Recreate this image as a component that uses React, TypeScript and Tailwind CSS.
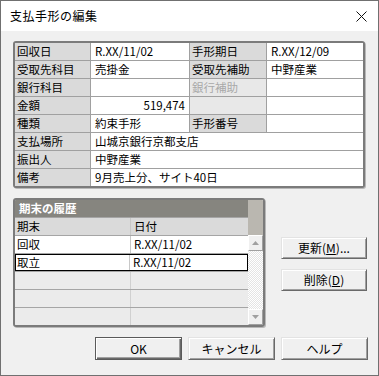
import React from 'react';

type Cell = { text?: string; kind: 'label' | 'value' | 'off'; span?: boolean; right?: boolean };

const rows: Cell[][] = [
  [
    { text: '回収日', kind: 'label' },
    { text: 'R.XX/11/02', kind: 'value' },
    { text: '手形期日', kind: 'label' },
    { text: 'R.XX/12/09', kind: 'value' },
  ],
  [
    { text: '受取先科目', kind: 'label' },
    { text: '売掛金', kind: 'value' },
    { text: '受取先補助', kind: 'label' },
    { text: '中野産業', kind: 'value' },
  ],
  [
    { text: '銀行科目', kind: 'label' },
    { text: '', kind: 'value' },
    { text: '銀行補助', kind: 'off' },
    { text: '', kind: 'value' },
  ],
  [
    { text: '金額', kind: 'label' },
    { text: '519,474', kind: 'value', right: true },
    { text: '', kind: 'off' },
    { text: '', kind: 'value' },
  ],
  [
    { text: '種類', kind: 'label' },
    { text: '約束手形', kind: 'value' },
    { text: '手形番号', kind: 'label' },
    { text: '', kind: 'value' },
  ],
  [
    { text: '支払場所', kind: 'label' },
    { text: '山城京銀行京都支店', kind: 'value', span: true },
  ],
  [
    { text: '振出人', kind: 'label' },
    { text: '中野産業', kind: 'value', span: true },
  ],
  [
    { text: '備考', kind: 'label' },
    { text: '9月売上分、サイト40日', kind: 'value', span: true },
  ],
];

function ClassicButton({ children, primary }: { children: React.ReactNode; primary?: boolean }) {
  return (
    <div
      className={
        primary
          ? 'h-[23px] w-[87px] border border-[#5a5a5a] bg-[#f0f0f0] shadow-[inset_1px_1px_0_#ffffff,inset_-1px_-1px_0_#696969,inset_-2px_-2px_0_#a0a0a0] flex items-center justify-center text-[12px] text-black'
          : 'h-[23px] w-[87px] border border-t-[#e3e3e3] border-l-[#e3e3e3] border-r-[#696969] border-b-[#696969] bg-[#f0f0f0] shadow-[inset_1px_1px_0_#ffffff,inset_-1px_-1px_0_#a0a0a0] flex items-center justify-center text-[12px] text-black'
      }
    >
      {children}
    </div>
  );
}

function SideButton({ children }: { children: React.ReactNode }) {
  return (
    <div className="h-[22px] w-[86px] border border-t-[#e3e3e3] border-l-[#e3e3e3] border-r-[#696969] border-b-[#696969] bg-[#f0f0f0] shadow-[inset_1px_1px_0_#ffffff,inset_-1px_-1px_0_#a0a0a0] flex items-center justify-center text-[12px] text-black">
      {children}
    </div>
  );
}

function ScrollArrow({ up }: { up?: boolean }) {
  return (
    <div className="h-[16px] w-[15px] bg-[#f0f0f0] border border-t-white border-l-white border-r-[#a0a0a0] border-b-[#a0a0a0] flex items-center justify-center">
      <svg width="7" height="4" viewBox="0 0 7 4">
        {up ? <polygon points="3.5,0 7,4 0,4" fill="#a0a0a0" /> : <polygon points="0,0 7,0 3.5,4" fill="#a0a0a0" />}
      </svg>
    </div>
  );
}

export default function App() {
  return (
    <div className="w-[379px] h-[376px] border border-[#707070] bg-[#f0f0f0] flex flex-col font-['Noto_Sans_CJK_JP','Noto_Sans',sans-serif] text-black overflow-hidden">
      {/* Title bar */}
      <div className="h-[30px] bg-white flex items-center justify-between pl-[9px] pr-[11px] shrink-0">
        <span className="text-[12px] tracking-[0.5px]">支払手形の編集</span>
        <svg width="11" height="11" viewBox="0 0 11 11">
          <path d="M0.5 0.5 L10.5 10.5 M10.5 0.5 L0.5 10.5" stroke="#111" strokeWidth="1" />
        </svg>
      </div>

      {/* Detail table */}
      <div className="mt-[10px] ml-[12px] w-[352px] border-2 border-[#7b7b7b] rounded-[3px] shadow-[1px_1px_0_#b8b8b8] bg-[#a0a0a0]">
        <div className="grid grid-cols-[75px_98px_76px_96px] gap-px">
          {rows.map((r, i) =>
            r.map((c, j) => (
              <div
                key={`${i}-${j}`}
                className={[
                  'h-[17px] leading-[17px] text-[11.5px] whitespace-nowrap overflow-hidden',
                  c.span ? 'col-span-3' : '',
                  c.kind === 'label' ? 'bg-[#dadada] px-[2px]' : c.kind === 'off' ? 'bg-[#e8e8e8] text-[#a8a8a8] px-[2px]' : 'bg-white px-[4px]',
                  c.right ? 'text-right pr-[4px]' : '',
                ].join(' ')}
              >
                {c.text}
              </div>
            ))
          )}
        </div>
      </div>

      {/* History + side buttons */}
      <div className="mt-[10px] ml-[12px] flex">
        <div className="w-[252px] h-[129px] border-2 border-[#7b7b7b] rounded-[3px] shadow-[1px_1px_0_#b8b8b8] flex overflow-hidden">
          <div className="w-[233px] flex flex-col bg-[#a5a5a5] gap-px">
            <div className="h-[17px] leading-[17px] bg-[#86857f] text-white font-bold text-[11.5px] px-[4px]">期末の履歴</div>
            <div className="grid grid-cols-[115px_117px] gap-px bg-[#c8c8c8]">
              <div className="h-[17px] leading-[17px] bg-[#dadada] text-[11.5px] px-[2px]">期末</div>
              <div className="h-[17px] leading-[17px] bg-[#dadada] text-[11.5px] px-[3px]">日付</div>
            </div>
            <div className="grid grid-cols-[115px_117px] gap-px bg-[#c8c8c8]">
              <div className="h-[17px] leading-[17px] bg-white text-[11.5px] px-[2px]">回収</div>
              <div className="h-[17px] leading-[17px] bg-white text-[11.5px] px-[3px]">R.XX/11/02</div>
            </div>
            <div className="h-[17px] bg-white border-[1.5px] border-black grid grid-cols-[113px_1px_1fr]">
              <div className="leading-[14px] text-[11.5px] px-[1px]">取立</div>
              <div className="bg-[#c8c8c8]" />
              <div className="leading-[14px] text-[11.5px] px-[3px]">R.XX/11/02</div>
            </div>
            {[0, 1, 2].map((k) => (
              <div key={k} className="grid grid-cols-[115px_117px] gap-px bg-[#d0d0d0]">
                <div className="h-[17px] bg-[#ebebeb]" />
                <div className="h-[17px] bg-[#ebebeb]" />
              </div>
            ))}
          </div>
          <div className="w-[15px] flex flex-col">
            <div className="h-[35px] bg-[#bab7b0]" />
            <ScrollArrow up />
            <div className="flex-1 bg-[repeating-conic-gradient(#ffffff_0%_25%,#e4e4e4_0%_50%)] bg-size-[2px_2px]" />
            <ScrollArrow />
          </div>
        </div>
        <div className="ml-[16px] pt-[39px] flex flex-col gap-[10px]">
          <SideButton>
            更新(<span className="underline">M</span>)...
          </SideButton>
          <SideButton>
            削除(<span className="underline">D</span>)
          </SideButton>
        </div>
      </div>

      {/* Bottom buttons */}
      <div className="mt-[10px] mr-[10px] flex justify-end gap-[6px]">
        <ClassicButton primary>OK</ClassicButton>
        <ClassicButton>キャンセル</ClassicButton>
        <ClassicButton>ヘルプ</ClassicButton>
      </div>
    </div>
  );
}
